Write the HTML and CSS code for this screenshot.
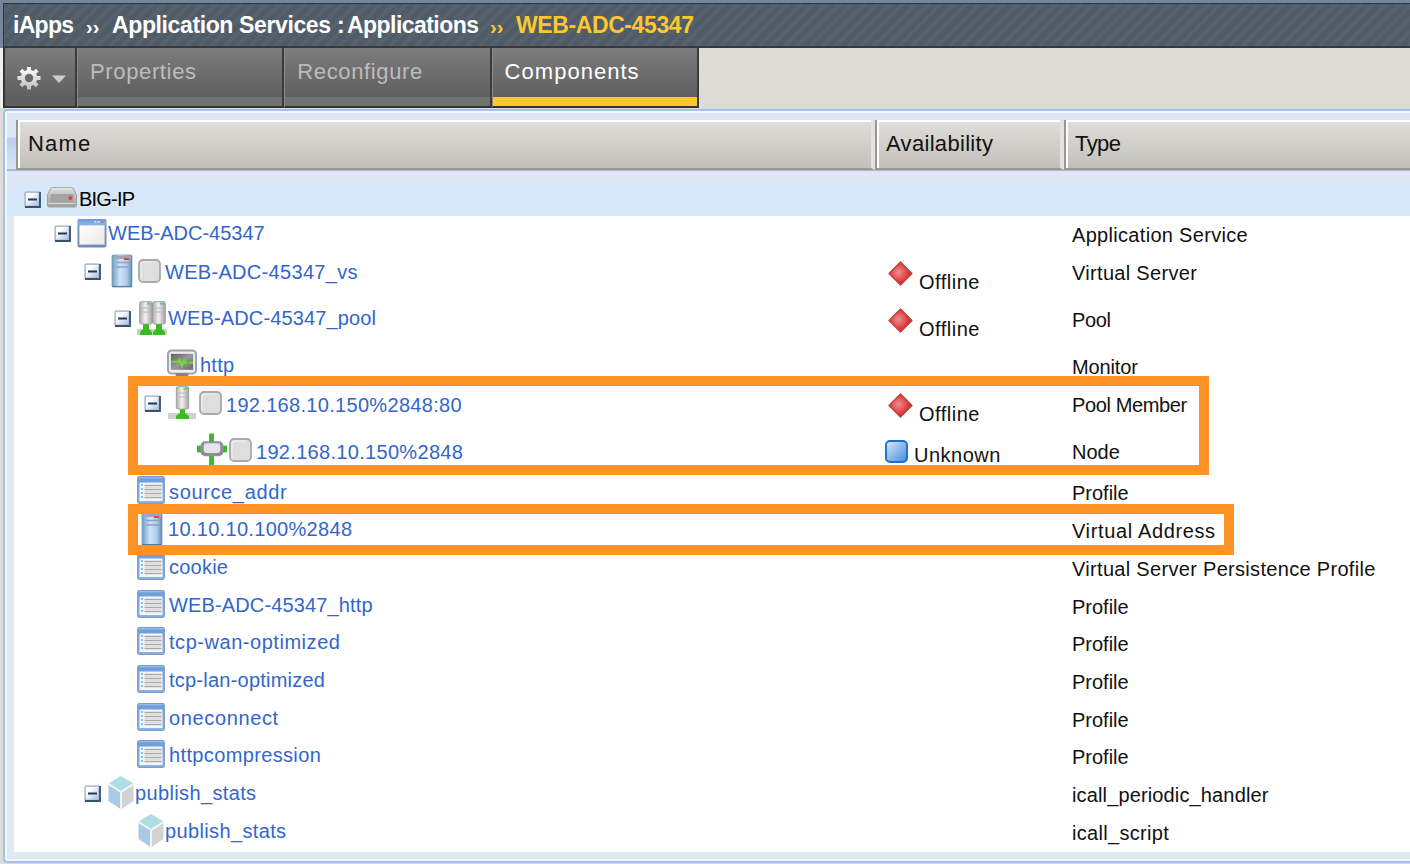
FILE: index.html
```html
<!DOCTYPE html>
<html lang="en">
<head>
<meta charset="utf-8">
<title>iApps - WEB-ADC-45347</title>
<link rel="stylesheet" href="styles.css">
</head>
<body>
<svg class="defs" width="0" height="0">
  <defs>
    <linearGradient id="gBtn" x1="0" y1="0" x2="1" y2="1"><stop offset=".3" stop-color="#fff"/><stop offset="1" stop-color="#a9bfe0"/></linearGradient>
    <linearGradient id="gBlue" x1="0" y1="0" x2="1" y2="0"><stop offset="0" stop-color="#6f9bc6"/><stop offset=".4" stop-color="#cfe5f8"/><stop offset=".75" stop-color="#a9cbea"/><stop offset="1" stop-color="#5f87b0"/></linearGradient>
    <linearGradient id="gGrey" x1="0" y1="0" x2="1" y2="0"><stop offset="0" stop-color="#a9a9a9"/><stop offset=".45" stop-color="#f2f2f4"/><stop offset="1" stop-color="#a0a0a0"/></linearGradient>
    <linearGradient id="gDev" x1="0" y1="0" x2="0" y2="1"><stop offset="0" stop-color="#dedede"/><stop offset="1" stop-color="#9d9d9d"/></linearGradient>
    <linearGradient id="gBar" x1="0" y1="0" x2="0" y2="1"><stop offset="0" stop-color="#6a9bda"/><stop offset="1" stop-color="#8db6ea"/></linearGradient>
    <linearGradient id="gFrame" x1="0" y1="0" x2="0" y2="1"><stop offset="0" stop-color="#6f9fdc"/><stop offset="1" stop-color="#7189b0"/></linearGradient>
    <linearGradient id="gPane" x1="0" y1="0" x2="1" y2="1"><stop offset="0" stop-color="#fff"/><stop offset="1" stop-color="#e9eae2"/></linearGradient>
    <linearGradient id="gScr" x1="0" y1="0" x2="1" y2="1"><stop offset="0" stop-color="#606060"/><stop offset=".5" stop-color="#999"/><stop offset="1" stop-color="#666"/></linearGradient>
    <linearGradient id="gGear" x1="0" y1="0" x2="0" y2="1"><stop offset="0" stop-color="#fff"/><stop offset="1" stop-color="#bdbdbd"/></linearGradient>
    <radialGradient id="gRed" cx=".42" cy=".45" r=".55"><stop offset="0" stop-color="#f08f8f"/><stop offset=".6" stop-color="#df4a4a"/><stop offset="1" stop-color="#cd2525"/></radialGradient>
    <linearGradient id="gUnk" x1="0" y1="0" x2="1" y2="1"><stop offset=".1" stop-color="#cfe2f8"/><stop offset="1" stop-color="#3f88dc"/></linearGradient>
    <symbol id="toggle" viewBox="0 0 17 17"><rect x=".5" y=".5" width="16" height="16" rx="1.5" fill="#93a4bd"/><path d="M16 1v15H1" fill="none" stroke="#39526f" stroke-width="1.8"/><rect x="1.7" y="1.7" width="13" height="13" fill="url(#gBtn)"/><path d="M4 8.500h9" stroke="#1f3a58" stroke-width="2"/></symbol>
    <symbol id="check" viewBox="0 0 23 24"><rect x="1" y="1" width="21" height="22" rx="4" fill="#dedede" stroke="#a9a9a9" stroke-width="1.8"/><path d="M3 20V6q0-3 3-3h11" fill="none" stroke="#f1f1f1"/></symbol>
    <symbol id="device" viewBox="0 0 30 21"><path d="M5 .7h20q1 0 1.700 1.500L29.500 8v10.500q0 1.500-1.500 1.500H2Q.5 20 .5 18.500V8L3.300 2.200Q4 .7 5 .7z" fill="url(#gDev)" stroke="#a2a2a2"/><path d="M5 2h20" stroke="#ececec"/><rect x="3.500" y="7" width="23" height="8" rx="1" fill="#a4a4a4"/><path d="M1 16.500h28" stroke="#d4d4d4"/><circle cx="23.300" cy="11" r="2" fill="#f33"/></symbol>
    <symbol id="window" viewBox="0 0 31 31"><rect x="1" y="1" width="29" height="28.500" rx="1.500" fill="url(#gFrame)" stroke="#6b94c4"/><rect x="1" y="1" width="29" height="5.500" fill="url(#gBar)"/><path d="M18 3.500h2m1.500 0h2" stroke="#d4e3f5" stroke-width="2"/><path d="M25 3.500h2.500" stroke="#d9776b" stroke-width="2"/><rect x="2.500" y="7" width="26" height="20" fill="url(#gPane)"/></symbol>
    <symbol id="server" viewBox="0 0 22 34"><rect x="1" y="1" width="20" height="32" rx="1" fill="url(#gBlue)" stroke="#7799bb" stroke-width=".8"/><rect x="2" y="2" width="18" height="3" fill="#9aa9b7"/><path d="M13 5h5" stroke="#e64040" stroke-width="2"/><path d="M5 8.500h13M5 13h13" stroke="#8fa3b6" stroke-width="1.500"/><path d="M1 32.500h20" stroke="#58769a"/></symbol>
    <symbol id="tower" viewBox="0 0 14 24"><rect x=".6" y=".6" width="12.800" height="22.500" rx="2" fill="url(#gGrey)" stroke="#999" stroke-width=".8"/><path d="M3 7h8M3 11h8" stroke="#b9b9b9"/><path d="M8 2.600h4" stroke="#57c59a" stroke-width="1.800"/></symbol>
    <symbol id="pool" viewBox="0 0 30 35"><path d="M0 28h30v6H0z" fill="#c9cfcb"/><path d="M6 22h6v6l3 3v3H3v-3l3-3zM19 22h6v6l3 3v3H16v-3l3-3z" fill="#37bd22"/><use href="#tower" x="2" y="0" width="14" height="24"/><use href="#tower" x="15" y="0" width="14" height="24"/></symbol>
    <symbol id="member" viewBox="0 0 30 35"><path d="M1 27h28v6H1z" fill="#cdd1d0"/><path d="M13 22h5v5l4 3v3H9v-3l4-3z" fill="#37bd22"/><use href="#tower" x="8.500" y="0" width="14" height="24"/></symbol>
    <symbol id="monitor" viewBox="0 0 31 28"><rect x="1" y="1" width="29" height="24" rx="4" fill="#eceef4" stroke="#9da0b0" stroke-width="2"/><rect x="4" y="4.500" width="23" height="16.500" fill="url(#gScr)"/><path d="M4.500 12.500h7l1.500-2 2.500 7 2-6 1.500 2h8" fill="none" stroke="#6fe02c" stroke-width="1.800"/><path d="M22 9v7" stroke="#58b32c" stroke-width="1.400"/><path d="M9 26h13" stroke="#8c8080" stroke-width="3"/></symbol>
    <symbol id="node" viewBox="0 0 31 33"><path d="M15 0v33" stroke="#35bd24" stroke-width="5"/><path d="M0 16h31" stroke="#35bd24" stroke-width="7"/><rect x="3.500" y="8" width="24" height="15.500" rx="5" fill="#8f8f96"/><rect x="7" y="10" width="17" height="10" rx="2.500" fill="#e4e3ee"/></symbol>
    <symbol id="profile" viewBox="0 0 28 28"><rect x=".7" y=".7" width="26.600" height="26.600" rx="1.500" fill="url(#gBar)" stroke="#7d9cc8" stroke-width="1.200"/><path d="M1.500 1.800h25" stroke="#a7c6ee"/><rect x="2.500" y="6.500" width="23" height="18.500" fill="#f5f6f7"/><path d="M5 8v16" stroke="#7cc0f4" stroke-width="2" stroke-dasharray="2 2"/><path d="M7.500 9.500h17m-17 4h17m-17 4h17m-17 4h17" stroke="#aaa9a7" stroke-width="1.400"/><path d="M7.500 11.500h17m-17 4h17m-17 4h17" stroke="#dcdcdc" stroke-width="1.200"/></symbol>
    <symbol id="cube" viewBox="0 0 26 33"><path d="M13 0l12.500 7.500L13 15.500.5 7.500z" fill="#b0dde4"/><path d="M.5 8.500L12.500 16v17L.5 25z" fill="#a9c9e4"/><path d="M25.500 8.500L13.500 16v17l12-8z" fill="#d2d2d3"/><path d="M.5 8L13 16l12.500-8M13 16v17" fill="none" stroke="#f3f8fa" stroke-width="1.600"/></symbol>
    <symbol id="offline" viewBox="0 0 25 25"><path d="M12.500 1L24 12.500 12.500 24 1 12.500z" fill="url(#gRed)" stroke="#bd4040" stroke-width="1.300" stroke-linejoin="round"/></symbol>
    <symbol id="unknown" viewBox="0 0 23 23"><rect x="1" y="1" width="21" height="21" rx="4" fill="url(#gUnk)" stroke="#1c6fcc" stroke-width="1.900"/></symbol>
  </defs>
</svg>
<div class="app">
  <header class="crumbs">
    <span class="c1">iApps</span><span class="c2">››</span><span class="c3">Application Services</span><span class="c4">:</span><span class="c5">Applications</span><span class="c6">››</span><span class="c7">WEB-ADC-45347</span>
  </header>
  <nav class="tabs">
    <div class="gear">
      <svg width="24" height="24" viewBox="-12 -12 24 24"><path fill="url(#gGear)" fill-rule="evenodd" d="M-2-11h4v3l2.500 1 2.300-2.300 2.700 2.700L7.200-4.300 8-2h3.500v4H8l-.8 2.300 2.300 2.300-2.700 2.700L4.500 7 2 8v3.500h-4V8l-2.500-1-2.300 2.300-2.700-2.700 2.300-2.300L-8 2h-3.500v-4H-8l.8-2.300-2.300-2.300 2.700-2.700L-4.500-7-2-8zM0-4.200A4.200 4.200 0 1 0 0 4.200 4.200 4.200 0 1 0 0-4.200z"/></svg>
      <svg width="14" height="9" viewBox="0 0 14 9"><path d="M0 .5h14L7 8z" fill="#cdcdcd"/></svg>
    </div>
    <div class="tab s6">Properties</div>
    <div class="tab s6">Reconfigure</div>
    <div class="tab on s10">Components</div>
  </nav>
  <main class="panel">
    <div class="head">
      <div class="th s13">Name</div>
      <div class="th s3">Availability</div>
      <div class="th n6">Type</div>
    </div>
    <div class="root">
      <svg class="tg"><use href="#toggle"/></svg><svg class="dev"><use href="#device"/></svg><span class="n8">BIG-IP</span>
    </div>
    <div class="body">
      <div class="row h38 l1">
        <div class="name"><svg class="tg"><use href="#toggle"/></svg><svg class="ic window"><use href="#window"/></svg><a class="lk">WEB-ADC-45347</a></div>
        <div class="av"></div>
        <div class="ty s3">Application Service</div>
      </div>
      <div class="row h47 l2">
        <div class="name"><svg class="tg"><use href="#toggle"/></svg><svg class="ic server"><use href="#server"/></svg><svg class="ck"><use href="#check"/></svg><a class="lk s3 low">WEB-ADC-45347_vs</a></div>
        <div class="av"><svg><use href="#offline"/></svg><span>Offline</span></div>
        <div class="ty s3">Virtual Server</div>
      </div>
      <div class="row h47 l3">
        <div class="name"><svg class="tg"><use href="#toggle"/></svg><svg class="ic pool"><use href="#pool"/></svg><a class="lk s1">WEB-ADC-45347_pool</a></div>
        <div class="av"><svg><use href="#offline"/></svg><span>Offline</span></div>
        <div class="ty n3">Pool</div>
      </div>
      <div class="row h38 l4">
        <div class="name"><i class="tg"></i><svg class="ic monitor"><use href="#monitor"/></svg><a class="lk s2">http</a></div>
        <div class="av"></div>
        <div class="ty n1">Monitor</div>
      </div>
      <div class="row h47 l4">
        <div class="name"><svg class="tg"><use href="#toggle"/></svg><svg class="ic member"><use href="#member"/></svg><svg class="ck"><use href="#check"/></svg><a class="lk s3 lower">192.168.10.150%2848:80</a></div>
        <div class="av"><svg><use href="#offline"/></svg><span>Offline</span></div>
        <div class="ty n4">Pool Member</div>
      </div>
      <div class="row h41 l5">
        <div class="name"><i class="tg"></i><svg class="ic node"><use href="#node"/></svg><svg class="ck"><use href="#check"/></svg><a class="lk s3 lower">192.168.10.150%2848</a></div>
        <div class="av unknown"><svg><use href="#unknown"/></svg><span>Unknown</span></div>
        <div class="ty">Node</div>
      </div>
      <div class="row h38 l3">
        <div class="name"><i class="tg"></i><svg class="ic profile"><use href="#profile"/></svg><a class="lk s6 low">source_addr</a></div>
        <div class="av"></div>
        <div class="ty">Profile</div>
      </div>
      <div class="row h38 l3">
        <div class="name"><i class="tg"></i><svg class="ic server"><use href="#server"/></svg><a class="lk s3">10.10.10.100%2848</a></div>
        <div class="av"></div>
        <div class="ty s6">Virtual Address</div>
      </div>
      <div class="row h38 l3">
        <div class="name"><i class="tg"></i><svg class="ic profile"><use href="#profile"/></svg><a class="lk s2">cookie</a></div>
        <div class="av"></div>
        <div class="ty s3">Virtual Server Persistence Profile</div>
      </div>
      <div class="row h38 l3">
        <div class="name"><i class="tg"></i><svg class="ic profile"><use href="#profile"/></svg><a class="lk s1">WEB-ADC-45347_http</a></div>
        <div class="av"></div>
        <div class="ty">Profile</div>
      </div>
      <div class="row h38 l3">
        <div class="name"><i class="tg"></i><svg class="ic profile"><use href="#profile"/></svg><a class="lk s5">tcp-wan-optimized</a></div>
        <div class="av"></div>
        <div class="ty">Profile</div>
      </div>
      <div class="row h38 l3">
        <div class="name"><i class="tg"></i><svg class="ic profile"><use href="#profile"/></svg><a class="lk s2">tcp-lan-optimized</a></div>
        <div class="av"></div>
        <div class="ty">Profile</div>
      </div>
      <div class="row h38 l3">
        <div class="name"><i class="tg"></i><svg class="ic profile"><use href="#profile"/></svg><a class="lk s6">oneconnect</a></div>
        <div class="av"></div>
        <div class="ty">Profile</div>
      </div>
      <div class="row h38 l3">
        <div class="name"><i class="tg"></i><svg class="ic profile"><use href="#profile"/></svg><a class="lk s4">httpcompression</a></div>
        <div class="av"></div>
        <div class="ty">Profile</div>
      </div>
      <div class="row h38 l2">
        <div class="name"><svg class="tg"><use href="#toggle"/></svg><svg class="ic cube"><use href="#cube"/></svg><a class="lk s4">publish_stats</a></div>
        <div class="av"></div>
        <div class="ty s1">icall_periodic_handler</div>
      </div>
      <div class="row h38 l3">
        <div class="name"><i class="tg"></i><svg class="ic cube"><use href="#cube"/></svg><a class="lk s4">publish_stats</a></div>
        <div class="av"></div>
        <div class="ty s3">icall_script</div>
      </div>
    </div>
  </main>
  <div class="mark m1"></div>
  <div class="mark m2"></div>
</div>
</body>
</html>
```
FILE: styles.css
```css
* { box-sizing: border-box; }
body { margin: 0; background: #dedcd7; font-family: "Liberation Sans", Arial, sans-serif; font-size: 20px; color: #111; }
.defs { position: absolute; }
.app { position: relative; width: 1410px; height: 864px; overflow: hidden; }

/* letter-spacing steps: s = wider, n = narrower */
.n8 { letter-spacing: -.8px; }
.n6 { letter-spacing: -.57px; }
.n4 { letter-spacing: -.39px; }
.n3 { letter-spacing: -.34px; }
.n1 { letter-spacing: -.12px; }
.s1 { letter-spacing: .14px; }
.s2 { letter-spacing: .23px; }
.s3 { letter-spacing: .31px; }
.s4 { letter-spacing: .36px; }
.s5 { letter-spacing: .54px; }
.s6 { letter-spacing: .64px; }
.s10 { letter-spacing: 1.03px; }
.s13 { letter-spacing: 1.2px; }

.crumbs { display: flex; height: 48px; border-top: 3px solid #76879b; border-left: 3px solid #76879b; padding-left: 10px; background: repeating-linear-gradient(135deg, #4f5b67 0 5px, #55616d 5px 9px); box-shadow: inset 1px 1px #30353a, inset 0 -2px #38393b; color: #fff; font-weight: bold; font-size: 23px; white-space: nowrap; }
.crumbs span { line-height: 44px; height: 45px; }
.c1 { width: 61px; letter-spacing: -.72px; }
.c2, .c6 { width: 26px; font-size: 20px; padding-top: 2px; }
.c2 { margin-left: 12px; }
.c3 { width: 219px; letter-spacing: -.38px; }
.c4 { margin-left: 6px; width: 10px; }
.c5 { width: 132px; letter-spacing: -.55px; }
.c6 { margin-left: 11px; }
.c7 { letter-spacing: -.4px; }
.c6, .c7 { color: #fdc82f; }

.tabs { display: flex; height: 60px; border-left: 3px solid #efeeea; font-size: 22px; }
.gear, .tab { border-bottom: 2px solid #333; border-right: 2px solid #3a3a3a; background: linear-gradient(#7c7c7c, #5f5f5f 49px); }
.gear { width: 74px; border-left: 2px solid #333; display: flex; gap: 11px; padding: 18px 0 0 12px; }
.gear svg:last-child { margin-top: 9px; }
.tab { width: 207.3px; border-left: 1px solid #8a8a8a; padding-left: 12px; line-height: 48px; color: #bcbcbc; box-shadow: inset 0 -9px #717372; }
.tab.on { color: #fff; box-shadow: inset 0 -9px #fdc82f; }

.panel { margin: 1px 0 0 3px; height: 754px; border: 2px solid #a4c0ec; border-right: 0; border-radius: 4px 0 0 4px; background: #e0e8f6; box-shadow: inset 2px 2px #f4f8ff, inset 0 -2px #f1f5fc; padding: 2px 0 0 2px; }
.head { display: grid; grid-template-columns: 859px 189px 1fr; height: 58px; padding: 7px 0 0 9px; background: linear-gradient(#dce8f8 24px, #b9cff0 25px, #d8e5f7); border-bottom: 2px solid #9dbbea; font-size: 22px; }
.th { border-left: 2px solid #999791; border-right: 4px solid #e4e3e0; border-bottom: 2px solid #9b9a92; background: linear-gradient(#e0dfdb, #c1c0ba); box-shadow: inset 2px 2px #fff; padding-left: 10px; line-height: 48px; }
.th + .th { padding-left: 9px; }
.th:last-child { border-right: 0; }
.root { height: 45px; display: flex; padding-left: 17px; background: linear-gradient(#dfe7f5 9px, #d8e7fa 13px, #d7e8fb); }
.tg { flex: none; width: 17px; height: 17px; margin-right: 6px; }
.root .tg { margin-top: 20px; }
.dev { width: 30px; height: 21px; margin: 16px 2px 0 0; }
.root span { line-height: 56px; color: #000; }

.body { margin-left: 7px; background: #fff; height: 636px; }
.row { display: grid; grid-template-columns: 872px 186px 1fr; }
.h38 { height: 38px; }
.h41 { height: 41px; }
.h47 { height: 47px; }
.row:nth-child(n+9) { height: 37.7px; }
.name { display: flex; height: 36px; align-items: flex-start; }
.l1 .name { padding-left: 40px; }
.l2 .name { padding-left: 70px; }
.l3 .name { padding-left: 100px; }
.l4 .name { padding-left: 130px; }
.l5 .name { padding-left: 160px; }
.name .tg { margin-top: 9px; }
.ic { flex: none; width: 30px; height: 28px; margin: 3px 1px 0 0; }
.ic.window { height: 31px; margin-top: 2px; }
.ic.server { width: 22px; height: 34px; margin: 0 5px 0 4px; }
.ic.pool, .ic.member { height: 35px; margin-top: 0; }
.ic.member { margin-right: 2px; }
.ic.monitor { margin: 1px 3px 0 0; }
.ic.node { height: 33px; margin: 0 2px 0 0; }
.ic.profile { width: 28px; margin: 2px 4px 0 0; }
.ic.cube { width: 26px; height: 33px; margin: 0 1px; }
.ck { flex: none; width: 23px; height: 24px; margin: 5px 4px 0 0; }
.lk { color: #3366cc; line-height: 34px; white-space: nowrap; }
.lk.low { line-height: 36px; }
.lk.lower { line-height: 38px; }
.av { display: flex; align-items: flex-start; padding-left: 2px; letter-spacing: .5px; }
.av svg { width: 25px; height: 25px; margin: 7px 6px 0 0; }
.av span { line-height: 56px; height: 38px; }
.av.unknown { padding-left: 0; }
.unknown svg { width: 23px; height: 23px; margin: 7px 6px 0 -1px; }
.unknown span { line-height: 45px; }
.ty { line-height: 38px; white-space: nowrap; }

.mark { position: absolute; left: 128px; border: 10px solid #ff9326; }
.m1 { top: 376px; width: 1081px; height: 99px; }
.m2 { top: 504px; width: 1106px; height: 51px; }
```
